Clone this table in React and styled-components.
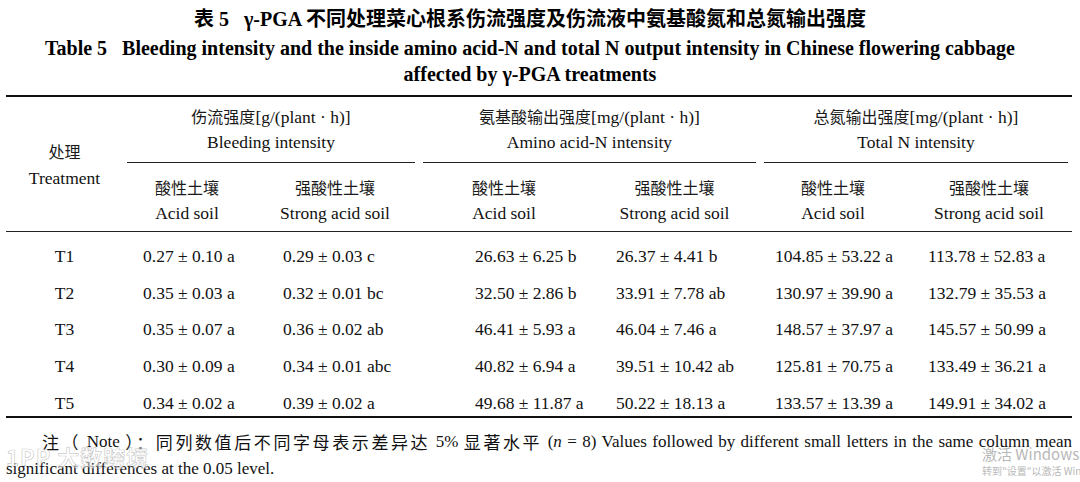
import React from 'react';
import styled, { createGlobalStyle } from 'styled-components';

const Global = createGlobalStyle`
  html, body { margin: 0; padding: 0; background: #fff; }
  body {
    font-family: "Liberation Serif", "Noto Sans CJK SC", serif;
    color: #111;
    width: 1080px;
    height: 482px;
    overflow: hidden;
  }
`;

const Page = styled.div`
  position: relative;
  width: 1080px;
  height: 482px;
  padding: 0 8px 0 6px;
  box-sizing: border-box;
`;

const TitleBlock = styled.div`
  padding: 3px 18px 0 0;
  text-align: center;
`;

const TitleCn = styled.div`
  height: 32px;
  font-family: "Noto Sans CJK SC", sans-serif;
  font-weight: 700;
  font-size: 20px;
  line-height: 30px;
  color: #000;
  white-space: nowrap;
`;

const Latin = styled.span`
  font-family: "Liberation Serif", serif;
  font-weight: ${p => (p.$bold ? 700 : 400)};
`;

const TitleEn = styled.div`
  height: 26px;
  font-family: "Liberation Serif", serif;
  font-weight: 700;
  font-size: 20px;
  line-height: 26px;
  color: #000;
  white-space: nowrap;
`;

const Table = styled.div`
  display: grid;
  grid-template-columns: 117px 128px 168px 170px 171px 146px 166px;
  margin-top: 8px;
  border-top: 2px solid #111;
  border-bottom: 2px solid #111;
  font-size: 17.5px;
`;

const TreatHead = styled.div`
  grid-row: 1 / span 2;
  grid-column: 1;
  display: flex;
  flex-direction: column;
  justify-content: center;
  align-items: center;
  padding-top: 2px;
  border-bottom: 1px solid #222;
`;

const GroupHead = styled.div`
  grid-column: span 2;
  grid-row: 1;
  padding-top: 6px;
  text-align: center;
`;

const GroupRule = styled.div`
  margin: 7px 4px 0;
  border-top: 1px solid #222;
`;

const SubHead = styled.div`
  grid-row: 2;
  padding: 11px 0 5px;
  text-align: center;
  border-bottom: 1px solid #222;
`;

const Cn = styled.span`
  font-family: "Noto Sans CJK SC", sans-serif;
  font-weight: 400;
  font-size: 16px;
  color: #1a1a1a;
`;

const Line = styled.div`
  height: ${p => p.$h || 26}px;
  line-height: ${p => p.$h || 26}px;
  white-space: nowrap;
`;

const DataCell = styled.div`
  height: 36.75px;
  box-sizing: border-box;
  padding-top: 10.75px;
  line-height: 26px;
  white-space: nowrap;
  text-align: ${p => (p.$center ? 'center' : 'left')};
  padding-left: ${p => p.$pad}px;
`;

const Notes = styled.div`
  padding-top: 10px;
  font-size: 17px;
`;

const NoteFirst = styled.div`
  height: 27px;
  line-height: 27px;
  padding-left: 36px;
  text-align: justify;
  text-align-last: justify;
  white-space: nowrap;
`;

const NoteSecond = styled.div`
  height: 27px;
  line-height: 27px;
  white-space: nowrap;
`;

const NoteCn = styled.span`
  display: inline-block;
  font-family: "Noto Sans CJK SC", sans-serif;
  font-size: 17px;
  letter-spacing: 2.6px;
  line-height: 27px;
  height: 27px;
  vertical-align: top;
`;

const Italic = styled.i`
  font-style: italic;
`;

const WinMark = styled.div`
  position: absolute;
  left: 982px;
  top: 444px;
  font-family: "Noto Sans CJK SC", "Noto Sans", sans-serif;
  color: #b8b8b8;
  white-space: nowrap;
`;

const WinBig = styled.div`
  font-size: 15px;
  line-height: 20px;
`;

const WinSmall = styled.div`
  font-size: 10px;
  line-height: 14px;
`;

const SiteMark = styled.div`
  position: absolute;
  left: 6px;
  top: 443px;
  font-family: "Noto Sans CJK SC", sans-serif;
  font-weight: 700;
  font-size: 22px;
  line-height: 26px;
  color: rgba(255, 255, 255, 0.55);
  -webkit-text-stroke: 0.7px rgba(160, 160, 160, 0.55);
  letter-spacing: 1px;
  white-space: nowrap;
`;

const groups = [
  { cn: '伤流强度', unit: '[g/(plant · h)]', en: 'Bleeding intensity' },
  { cn: '氨基酸输出强度', unit: '[mg/(plant · h)]', en: 'Amino acid-N intensity' },
  { cn: '总氮输出强度', unit: '[mg/(plant · h)]', en: 'Total N intensity' },
];

const subs = [
  { cn: '酸性土壤', en: 'Acid soil' },
  { cn: '强酸性土壤', en: 'Strong acid soil' },
];

const pads = [20, 32, 56, 27, 15, 22];

const rows = [
  ['T1', '0.27 ± 0.10 a', '0.29 ± 0.03 c', '26.63 ± 6.25 b', '26.37 ± 4.41 b', '104.85 ± 53.22 a', '113.78 ± 52.83 a'],
  ['T2', '0.35 ± 0.03 a', '0.32 ± 0.01 bc', '32.50 ± 2.86 b', '33.91 ± 7.78 ab', '130.97 ± 39.90 a', '132.79 ± 35.53 a'],
  ['T3', '0.35 ± 0.07 a', '0.36 ± 0.02 ab', '46.41 ± 5.93 a', '46.04 ± 7.46 a', '148.57 ± 37.97 a', '145.57 ± 50.99 a'],
  ['T4', '0.30 ± 0.09 a', '0.34 ± 0.01 abc', '40.82 ± 6.94 a', '39.51 ± 10.42 ab', '125.81 ± 70.75 a', '133.49 ± 36.21 a'],
  ['T5', '0.34 ± 0.02 a', '0.39 ± 0.02 a', '49.68 ± 11.87 a', '50.22 ± 18.13 a', '133.57 ± 13.39 a', '149.91 ± 34.02 a'],
];

export default function App() {
  return (
    <Page>
      <Global />
      <TitleBlock>
        <TitleCn>
          表<Latin $bold> 5&nbsp;&nbsp; γ-PGA </Latin>不同处理菜心根系伤流强度及伤流液中氨基酸氮和总氮输出强度
        </TitleCn>
        <TitleEn>
          Table 5&nbsp;&nbsp; Bleeding intensity and the inside amino acid-N and total N output intensity in Chinese flowering cabbage
        </TitleEn>
        <TitleEn>affected by γ-PGA treatments</TitleEn>
      </TitleBlock>

      <Table>
        <TreatHead>
          <Line $h={27}><Cn>处理</Cn></Line>
          <Line $h={27}>Treatment</Line>
        </TreatHead>
        {groups.map(g => (
          <GroupHead key={g.en}>
            <Line><Cn>{g.cn}</Cn>{g.unit}</Line>
            <Line>{g.en}</Line>
            <GroupRule />
          </GroupHead>
        ))}
        {groups.map(g =>
          subs.map(s => (
            <SubHead key={g.en + s.en}>
              <Line><Cn>{s.cn}</Cn></Line>
              <Line>{s.en}</Line>
            </SubHead>
          ))
        )}
        {rows.map(r =>
          r.map((v, i) => (
            <DataCell key={r[0] + i} $center={i === 0} $pad={i === 0 ? 0 : pads[i - 1]}>
              {v}
            </DataCell>
          ))
        )}
      </Table>

      <Notes>
        <NoteFirst>
          <NoteCn>注（</NoteCn> Note <NoteCn>）：同列数值后不同字母表示差异达</NoteCn> 5% <NoteCn>显著水平</NoteCn> (<Italic>n</Italic> = 8) Values followed by different small letters in the same column mean
        </NoteFirst>
        <NoteSecond>significant differences at the 0.05 level.</NoteSecond>
      </Notes>

      <SiteMark>1PP 大数跨境</SiteMark>
      <WinMark>
        <WinBig>激活 Windows</WinBig>
        <WinSmall>转到"设置"以激活 Windows。</WinSmall>
      </WinMark>
    </Page>
  );
}
